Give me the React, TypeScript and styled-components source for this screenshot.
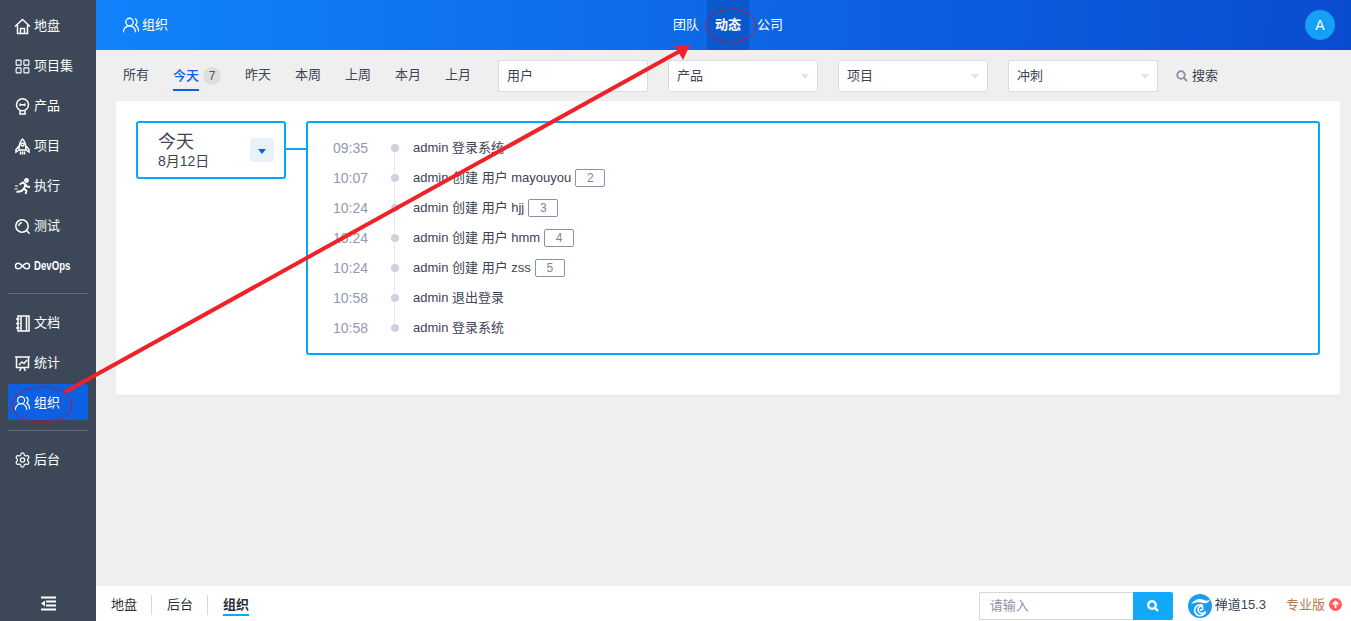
import * as React from "react";
import styled, { createGlobalStyle } from "styled-components";
import { Infinity as InfinityIcon, LayoutGrid, Settings, UsersRound } from "lucide-react";

const GlobalStyle = createGlobalStyle`
  html, body {
    margin: 0;
    padding: 0;
    height: 100%;
    overflow: hidden;
  }
  body {
    font-family: "Liberation Sans", "Noto Sans CJK SC", sans-serif;
    font-size: 13px;
    line-height: 16px;
    color: #3c4353;
  }
  * { box-sizing: border-box; }
`;

const Page = styled.div`
  position: relative;
  display: flex;
  width: 1351px;
  height: 621px;
  background: #efefef;
`;

const Sidebar = styled.aside`
  display: flex;
  flex-direction: column;
  width: 96px;
  flex: none;
  padding: 6px 8px 0;
  background: #3c4858;
`;

const NavItem = styled.div<{ $active?: boolean }>`
  display: flex;
  align-items: center;
  gap: 3px;
  height: ${(p) => (p.$active ? "36px" : "40px")};
  margin: ${(p) => (p.$active ? "1px 0 3px" : "0")};
  padding: ${(p) => (p.$active ? "1px 0 0 6px" : "0 0 0 6px")};
  color: #fff;
  font-size: 13px;
  border-radius: 2px;
  background: ${(p) => (p.$active ? "#0c60e1" : "transparent")};
  white-space: nowrap;
`;

const NavIcon = styled.span`
  display: flex;
  align-items: center;
  justify-content: center;
  width: 17px;
  height: 17px;
  flex: none;
`;

const DevOpsLabel = styled.span`
  display: inline-block;
  font-weight: 700;
  font-size: 13px;
  transform: scaleX(0.74);
  transform-origin: left center;
`;

const SideDivider = styled.div`
  height: 1px;
  margin: 7px 0 9px;
  background: #626c7c;
`;

const SideBottom = styled.div`
  display: flex;
  justify-content: center;
  margin-top: auto;
  height: 35px;
  align-items: center;
`;

const Main = styled.div`
  display: flex;
  flex-direction: column;
  flex: 1;
  min-width: 0;
`;

const Header = styled.header`
  display: grid;
  grid-template-columns: 1fr auto 1fr;
  align-items: center;
  height: 50px;
  flex: none;
  padding: 0 16px 0 25px;
  color: #fff;
  background: linear-gradient(92deg, #1183fb 0%, #0a4cd0 100%);
`;

const HeaderTitle = styled.div`
  display: flex;
  align-items: center;
  gap: 2px;
  margin-left: 1px;
  font-size: 13px;
`;

const HeaderNav = styled.nav`
  display: flex;
  height: 50px;
`;

const HeaderLink = styled.a<{ $active?: boolean }>`
  display: flex;
  align-items: center;
  justify-content: center;
  width: 42px;
  color: #fff;
  font-size: 13px;
  font-weight: ${(p) => (p.$active ? 700 : 400)};
  background: ${(p) => (p.$active ? "#0b58cc" : "transparent")};
`;

const Avatar = styled.div`
  justify-self: end;
  display: flex;
  align-items: center;
  justify-content: center;
  width: 30px;
  height: 30px;
  border-radius: 50%;
  background: #15a0f5;
  color: #fff;
  font-size: 14px;
`;

const Filters = styled.div`
  display: flex;
  align-items: center;
  height: 51px;
  flex: none;
  padding: 0 0 0 15px;
`;

const DateTab = styled.div<{ $active?: boolean }>`
  position: relative;
  display: flex;
  align-items: center;
  height: 32px;
  padding: 0 12px;
  color: ${(p) => (p.$active ? "#0c60e1" : "#3c4353")};
  font-weight: ${(p) => (p.$active ? 500 : 400)};
`;

const TabLabel = styled.span<{ $active?: boolean }>`
  display: block;
  line-height: 26px;
  height: 28px;
  border-bottom: 2px solid ${(p) => (p.$active ? "#0c60e1" : "transparent")};
  margin-top: ${(p) => (p.$active ? "2px" : "0")};
`;

const CountBadge = styled.span`
  display: flex;
  align-items: center;
  justify-content: center;
  width: 18px;
  height: 18px;
  margin-left: 4px;
  border-radius: 50%;
  background: #dedede;
  color: #555;
  font-size: 12px;
  font-weight: 400;
`;

const SelectRow = styled.div`
  display: flex;
  gap: 20px;
  margin-left: 15px;
`;

const SelectBox = styled.div`
  position: relative;
  display: flex;
  align-items: center;
  width: 150px;
  height: 32px;
  padding-left: 8px;
  background: #fff;
  border: 1px solid #dcdcdc;
  border-radius: 2px;
  color: #3c4353;
`;

const SelectCaret = styled.i`
  position: absolute;
  right: 8px;
  top: 13px;
  border-left: 4.5px solid transparent;
  border-right: 4.5px solid transparent;
  border-top: 5px solid #e0e2ec;
`;

const SearchLink = styled.div`
  display: flex;
  align-items: center;
  gap: 4px;
  margin-left: 18px;
  color: #3c4353;
`;

const Card = styled.section`
  display: flex;
  align-items: flex-start;
  height: 294px;
  margin: 0 11px 0 20px;
  padding: 20px;
  background: #fff;
  border-radius: 4px;
  box-shadow: 0 1px 1px rgba(0, 0, 0, 0.04);
`;

const DayBox = styled.div`
  position: relative;
  display: flex;
  align-items: center;
  justify-content: space-between;
  width: 150px;
  height: 58px;
  flex: none;
  padding: 0 10px 0 20px;
  border: 2px solid #00a9fc;
  border-radius: 3px;
`;

const DayText = styled.div`
  display: flex;
  flex-direction: column;
`;

const DayTitle = styled.span`
  font-size: 18px;
  line-height: 22px;
  color: #3c4353;
`;

const DaySub = styled.span`
  font-size: 14px;
  line-height: 16px;
  color: #3c4353;
`;

const DayToggle = styled.span`
  display: flex;
  align-items: center;
  justify-content: center;
  width: 24px;
  height: 24px;
  border-radius: 3px;
  background: #e8f1fc;
  &::before {
    content: "";
    margin-top: 3px;
    border-left: 4.5px solid transparent;
    border-right: 4.5px solid transparent;
    border-top: 5px solid #0c60e1;
  }
`;

const Connector = styled.div`
  width: 20px;
  height: 2px;
  flex: none;
  margin-top: 27px;
  background: #00a9fc;
`;

const Timeline = styled.div`
  flex: 1;
  height: 234px;
  padding: 10px 0 10px 25px;
  border: 2px solid #00a9fc;
  border-radius: 3px;
`;

const Row = styled.div`
  display: flex;
  align-items: center;
  height: 30px;
`;

const Time = styled.span`
  width: 35px;
  flex: none;
  font-size: 14px;
  color: #9399ac;
`;

const Dot = styled.span<{ $last?: boolean }>`
  position: relative;
  width: 8px;
  height: 8px;
  flex: none;
  margin: 0 14px 0 23px;
  border-radius: 50%;
  background: #ced1de;
  &::after {
    content: "";
    display: ${(p) => (p.$last ? "none" : "block")};
    position: absolute;
    left: 3px;
    top: 8px;
    width: 1px;
    height: 22px;
    background: #e6e7ec;
  }
`;

const Action = styled.span`
  color: #3c4353;
  font-size: 13px;
  white-space: nowrap;
`;

const IdTag = styled.span`
  display: flex;
  align-items: center;
  justify-content: center;
  width: 30px;
  height: 18px;
  margin: 0 0 0 4px;
  border: 1px solid #8b91a6;
  border-radius: 2px;
  color: #7d8498;
  font-size: 12px;
`;

const Footer = styled.footer`
  display: flex;
  align-items: center;
  height: 35px;
  flex: none;
  margin-top: auto;
  padding: 2px 9px 0 15px;
  background: #fff;
`;

const Crumb = styled.span<{ $active?: boolean }>`
  position: relative;
  display: flex;
  align-items: center;
  height: 33px;
  color: #2b2f38;
  font-weight: ${(p) => (p.$active ? 700 : 400)};
  &::after {
    content: "";
    display: ${(p) => (p.$active ? "block" : "none")};
    position: absolute;
    left: 0;
    right: 0;
    bottom: 5px;
    height: 2px;
    background: #13a4f0;
  }
`;

const CrumbSep = styled.i`
  width: 1px;
  height: 20px;
  margin: 0 15px 0 14px;
  background: #d8d8d8;
`;

const FooterRight = styled.div`
  display: flex;
  align-items: center;
  margin-left: auto;
`;

const QuickSearch = styled.div`
  display: flex;
  margin-top: 3px;
`;

const QuickInput = styled.div`
  display: flex;
  align-items: center;
  width: 154px;
  height: 28px;
  padding-left: 10px;
  border: 1px solid #d8d8d8;
  border-right: 0;
  border-radius: 2px 0 0 2px;
  color: #8b91a2;
`;

const QuickButton = styled.div`
  display: flex;
  align-items: center;
  justify-content: center;
  width: 40px;
  height: 28px;
  border-radius: 0 2px 2px 0;
  background: #13a9fb;
`;

const Brand = styled.div`
  display: flex;
  align-items: center;
  gap: 3px;
  margin-left: 15px;
  color: #3c4353;
  svg { margin-top: 3px; }
`;

const Edition = styled.div`
  display: flex;
  align-items: center;
  gap: 4px;
  margin-left: 20px;
  color: #b9794c;
`;

const Annotations = styled.svg`
  position: absolute;
  left: 0;
  top: 0;
  pointer-events: none;
`;

const Glyph = ({ children, size = 17 }: { children: React.ReactNode; size?: number }) => (
  <svg width={size} height={size} viewBox="0 0 17 17" fill="none" stroke="#fff" strokeWidth="1.5">
    {children}
  </svg>
);

const HomeIcon = () => (
  <Glyph>
    <path d="M1 8.500 8.500 1.500 16 8.500M3.500 7v8.500h10V7M6.500 15.500v-5h4v5" />
  </Glyph>
);

const BulbIcon = () => (
  <Glyph>
    <circle cx="8.500" cy="6.800" r="6" />
    <path d="M6 13v3h5v-3M6.200 6.800h4.600M6.200 5.600v2.400M10.800 5.600v2.400" />
  </Glyph>
);

const RocketIcon = () => (
  <Glyph>
    <path d="M8.500 1C5.500 3.500 5 7 5 12h7c0-5-.5-8.500-3.500-11z" />
    <circle cx="8.500" cy="6.500" r="1.500" />
    <path d="M5 8 2 11.500V14l3-2M12 8l3 3.500V14l-3-2M6.500 13.500v3M8.500 13.500v3M10.500 13.500v3" />
  </Glyph>
);

const RunIcon = () => (
  <Glyph>
    <circle cx="12.500" cy="2.500" r="1.700" fill="#fff" />
    <path d="M5.500 6.500 9 4.500l2.500 2L10 10.500l2.500 2.500-1 3M10 10.500 7.500 13l-5 1M11 6l2 2.500 3 .5" strokeWidth="1.900" />
    <path d="M1 8h3M.5 11h3" strokeWidth="1" />
  </Glyph>
);

const ProbeIcon = () => (
  <Glyph>
    <circle cx="8" cy="8" r="6.200" />
    <path d="M12.500 12.500l3.200 3.200M4.800 8A3.200 3.200 0 0 1 8 4.800" />
  </Glyph>
);

const BookIcon = () => (
  <Glyph>
    <rect x="4" y="1" width="11" height="15" />
    <path d="M7 1v15M12.500 1v15M2 4h3.500M2 8.500h3.500M2 13h3.500" />
  </Glyph>
);

const BoardIcon = () => (
  <Glyph>
    <path d="M1 2h15M2.500 2v10.500h12V2M5.500 16l2-3.500M11.500 16l-2-3.500M5 10l3-3 2 1.500 3-3.500" />
  </Glyph>
);

const CollapseIcon = () => (
  <svg width="15" height="15" viewBox="0 0 15 15" fill="#fff">
    <rect x="0" y="0.500" width="15" height="2" />
    <rect x="5" y="4.500" width="10" height="2" />
    <rect x="5" y="8.500" width="10" height="2" />
    <rect x="0" y="12.500" width="15" height="2" />
    <polygon points="0,7.500 4,4.500 4,10.500" />
  </svg>
);

const LensIcon = ({ size, color, width }: { size: number; color: string; width: number }) => (
  <svg width={size} height={size} viewBox="0 0 12 12" fill="none" stroke={color} strokeWidth={width}>
    <circle cx="5" cy="5" r="3.800" />
    <path d="M8 8l3 3" />
  </svg>
);

const BrandLogo = () => (
  <svg width="24" height="24" viewBox="0 0 24 24">
    <circle cx="12" cy="12" r="12" fill="#1a9cf0" />
    <path d="M3 10c4-5 9-6 13-4 2 1 4 1 6-1-1 4-4 5-7 4-3-1-7-1-12 1z" fill="#fff" />
    <path d="M15 11.500a5.500 5.500 0 1 0 2.500 6c-1.500 2-4 2.500-6 1.200s-2-5 0-6 3.500 0 3.300 1.800-2.300 2-2.800 .8" fill="none" stroke="#fff" strokeWidth="1.600" />
  </svg>
);

const UpgradeIcon = () => (
  <svg width="13" height="13" viewBox="0 0 13 13">
    <circle cx="6.500" cy="6.500" r="6.500" fill="#ff5d5d" />
    <path d="M6.500 10V3.500M3.700 6.300l2.800-2.800 2.800 2.800" fill="none" stroke="#fff" strokeWidth="1.800" />
  </svg>
);

const ICON = { size: 17, strokeWidth: 1.6 };

const primaryNav = [
  { label: "地盘", icon: <HomeIcon /> },
  { label: "项目集", icon: <LayoutGrid {...ICON} /> },
  { label: "产品", icon: <BulbIcon /> },
  { label: "项目", icon: <RocketIcon /> },
  { label: "执行", icon: <RunIcon /> },
  { label: "测试", icon: <ProbeIcon /> },
];

const dateTabs = ["昨天", "本周", "上周", "本月", "上月"];
const selects = [
  { label: "用户", caret: false },
  { label: "产品", caret: true },
  { label: "项目", caret: true },
  { label: "冲刺", caret: true },
];

const actions = [
  { time: "09:35", text: "admin 登录系统" },
  { time: "10:07", text: "admin 创建 用户 mayouyou", id: 2 },
  { time: "10:24", text: "admin 创建 用户 hjj", id: 3 },
  { time: "10:24", text: "admin 创建 用户 hmm", id: 4 },
  { time: "10:24", text: "admin 创建 用户 zss", id: 5 },
  { time: "10:58", text: "admin 退出登录" },
  { time: "10:58", text: "admin 登录系统" },
];

export default function App() {
  return (
    <Page>
      <GlobalStyle />
      <Sidebar>
        {primaryNav.map((item) => (
          <NavItem key={item.label}>
            <NavIcon>{item.icon}</NavIcon>
            {item.label}
          </NavItem>
        ))}
        <NavItem>
          <NavIcon>
            <InfinityIcon size={18} strokeWidth={2} color="#fff" />
          </NavIcon>
          <DevOpsLabel>DevOps</DevOpsLabel>
        </NavItem>
        <SideDivider />
        <NavItem>
          <NavIcon>
            <BookIcon />
          </NavIcon>
          文档
        </NavItem>
        <NavItem>
          <NavIcon>
            <BoardIcon />
          </NavIcon>
          统计
        </NavItem>
        <NavItem $active>
          <NavIcon>
            <UsersRound size={18} strokeWidth={1.7} color="#fff" />
          </NavIcon>
          组织
        </NavItem>
        <SideDivider />
        <NavItem>
          <NavIcon>
            <Settings size={18} strokeWidth={1.7} color="#fff" />
          </NavIcon>
          后台
        </NavItem>
        <SideBottom>
          <CollapseIcon />
        </SideBottom>
      </Sidebar>

      <Main>
        <Header>
          <HeaderTitle>
            <UsersRound size={18} strokeWidth={1.7} />
            组织
          </HeaderTitle>
          <HeaderNav>
            <HeaderLink>团队</HeaderLink>
            <HeaderLink $active>动态</HeaderLink>
            <HeaderLink>公司</HeaderLink>
          </HeaderNav>
          <Avatar>A</Avatar>
        </Header>

        <Filters>
          <DateTab>
            <TabLabel>所有</TabLabel>
          </DateTab>
          <DateTab $active>
            <TabLabel $active>今天</TabLabel>
            <CountBadge>7</CountBadge>
          </DateTab>
          {dateTabs.map((tab) => (
            <DateTab key={tab}>
              <TabLabel>{tab}</TabLabel>
            </DateTab>
          ))}
          <SelectRow>
            {selects.map((s) => (
              <SelectBox key={s.label}>
                {s.label}
                {s.caret && <SelectCaret />}
              </SelectBox>
            ))}
          </SelectRow>
          <SearchLink>
            <LensIcon size={12} color="#8b91a2" width={1.8} />
            搜索
          </SearchLink>
        </Filters>

        <Card>
          <DayBox>
            <DayText>
              <DayTitle>今天</DayTitle>
              <DaySub>8月12日</DaySub>
            </DayText>
            <DayToggle />
          </DayBox>
          <Connector />
          <Timeline>
            {actions.map((a, i) => (
              <Row key={i}>
                <Time>{a.time}</Time>
                <Dot $last={i === actions.length - 1} />
                <Action>{a.text}</Action>
                {a.id && <IdTag>{a.id}</IdTag>}
              </Row>
            ))}
          </Timeline>
        </Card>

        <Footer>
          <Crumb>地盘</Crumb>
          <CrumbSep />
          <Crumb>后台</Crumb>
          <CrumbSep />
          <Crumb $active>组织</Crumb>
          <FooterRight>
            <QuickSearch>
              <QuickInput>请输入</QuickInput>
              <QuickButton>
                <LensIcon size={12} color="#fff" width={2.4} />
              </QuickButton>
            </QuickSearch>
            <Brand>
              <BrandLogo />
              禅道15.3
            </Brand>
            <Edition>
              专业版
              <UpgradeIcon />
            </Edition>
          </FooterRight>
        </Footer>
      </Main>

      <Annotations width="1351" height="621" viewBox="0 0 1351 621">
        <line x1="65" y1="392" x2="680" y2="51" stroke="#ee2228" strokeWidth="4" />
        <polygon points="690,45 675,46 683,60" fill="#ee2228" />
        <ellipse cx="42" cy="405" rx="30" ry="18" fill="none" stroke="#c8102e" strokeWidth="1" strokeDasharray="6 1" />
        <ellipse cx="731" cy="25.500" rx="25" ry="16.500" fill="none" stroke="#c8102e" strokeWidth="1" strokeDasharray="6 1" />
      </Annotations>
    </Page>
  );
}
